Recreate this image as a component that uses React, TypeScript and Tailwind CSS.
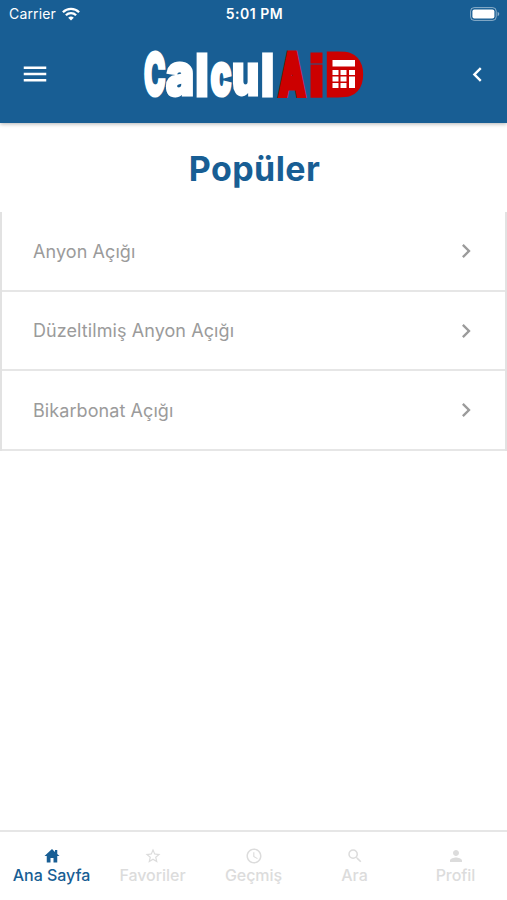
import { MdAccessTime, MdChevronLeft, MdChevronRight, MdMenu, MdPerson, MdSearch, MdStarOutline } from "react-icons/md";

const items = ["Anyon Açığı", "Düzeltilmiş Anyon Açığı", "Bikarbonat Açığı"];

const tabs = [
  { label: "Ana Sayfa", icon: HomeIcon, active: true },
  { label: "Favoriler", icon: MdStarOutline, active: false },
  { label: "Geçmiş", icon: MdAccessTime, active: false },
  { label: "Ara", icon: MdSearch, active: false },
  { label: "Profil", icon: MdPerson, active: false },
];

function HomeIcon({ size }: { size: number }) {
  return (
    <svg width={size} height={size} viewBox="0 0 24 24" fill="currentColor">
      <path d="M19 9.3V4h-3v2.6L12 2.500 2 12h3v8.500h5v-6h4v6h5V12h3z" />
    </svg>
  );
}

function WifiIcon() {
  return (
    <svg width="18" height="14" viewBox="0 0 18 14" fill="none" stroke="white" strokeWidth="2.3">
      <path d="M0.9 5.2a11.5 11.5 0 0 1 16.2 0" />
      <path d="M3.9 8.2a7.2 7.2 0 0 1 10.2 0" />
      <path d="M9 13.6 6.2 10.8a4 4 0 0 1 5.6 0z" fill="white" stroke="none" />
    </svg>
  );
}

function BatteryIcon() {
  return (
    <svg width="30" height="14" viewBox="0 0 30 14">
      <rect x="0.6" y="0.6" width="25.6" height="12.8" rx="3.6" fill="none" stroke="white" strokeOpacity="0.5" />
      <rect x="2.4" y="2.4" width="22" height="9.2" rx="2" fill="white" />
      <path d="M27.6 4.8c2.2.9 2.2 3.5 0 4.4z" fill="white" fillOpacity="0.5" />
    </svg>
  );
}

// Wordmark letters are squeezed to a condensed width, the calculator sits inside the D
function Logo() {
  return (
    <svg width="240" height="88" viewBox="-10 -20 240 88" fontFamily="'DejaVu Sans', sans-serif" fontWeight="700" fontSize="56">
      <g fill="white" stroke="white" strokeWidth="3" fontFamily="Inter, sans-serif" fontWeight="900">
        <text x="1" y="45" fontSize="58" textLength="21.500" lengthAdjust="spacingAndGlyphs">C</text>
        <text x="23" y="45" fontSize="57" textLength="28" lengthAdjust="spacingAndGlyphs">a</text>
        <text x="67.500" y="45" fontSize="57" textLength="21" lengthAdjust="spacingAndGlyphs">c</text>
        <text x="89" y="45" fontSize="57" textLength="27" lengthAdjust="spacingAndGlyphs">u</text>
      </g>
      <g fill="white" stroke="white" strokeWidth="3">
        <text x="51" y="45.500" textLength="16" lengthAdjust="spacingAndGlyphs">l</text>
        <text x="116.500" y="45.500" textLength="16" lengthAdjust="spacingAndGlyphs">l</text>
      </g>
      <g fill="#cc0000" stroke="#cc0000" strokeWidth="3">
        <text x="137" y="43.500" textLength="24" lengthAdjust="spacingAndGlyphs" strokeWidth="7">A</text>
        <text x="164.500" y="45.500" textLength="18" lengthAdjust="spacingAndGlyphs">i</text>
        <text x="180.500" y="45.500" fontSize="59" textLength="41" lengthAdjust="spacingAndGlyphs">D</text>
      </g>
      <rect x="188" y="8" width="27" height="31" fill="#cc0000" />
      <g fill="white">
        <rect x="189.500" y="10" width="22.500" height="6.500" />
        <rect x="189.500" y="20" width="6" height="5" />
        <rect x="197.500" y="20" width="6" height="5" />
        <rect x="206" y="20" width="6" height="5" />
        <rect x="189.500" y="26.500" width="6" height="5" />
        <rect x="197.500" y="26.500" width="6" height="5" />
        <rect x="189.500" y="33" width="6" height="5" />
        <rect x="197.500" y="33" width="6" height="5" />
        <rect x="206" y="26.500" width="6" height="11.500" />
      </g>
    </svg>
  );
}

export default function App() {
  return (
    <div className="flex h-[900px] w-full flex-col bg-white font-['Inter',sans-serif]">
      <header className="z-10 flex h-[123px] shrink-0 flex-col bg-[#185e94] text-white shadow-[0_1px_4px_rgba(0,0,0,0.3)]">
        <div className="grid h-[27px] grid-cols-3 items-center pr-[7px] pl-[9px]">
          <div className="flex items-center gap-[6px] text-[14px] tracking-[0.15px]">
            Carrier
            <WifiIcon />
          </div>
          <div className="text-center text-[14px] font-semibold tracking-[0.5px]">5:01 PM</div>
          <div className="flex justify-end">
            <BatteryIcon />
          </div>
        </div>
        <div className="grid h-[94px] grid-cols-[113px_240px_1fr] items-center pr-[15px] pl-[20px]">
          <MdMenu size={30} />
          <Logo />
          <MdChevronLeft size={29} className="justify-self-end" />
        </div>
      </header>

      <h1 className="flex h-[89px] shrink-0 items-center justify-center pt-[2px] pl-[2px] text-[34px] font-bold tracking-[0.4px] text-[#185e94]">Popüler</h1>

      <ul className="border-x-2 border-[#e2e2e2]">
        {items.map((item) => (
          <li key={item} className="flex h-[79.500px] items-center justify-between border-b-2 border-[#e6e6e6] pt-px pr-[25px] pl-[31px] text-[18px] tracking-[0.080px] text-[#9b9b9b]">
            {item}
            <MdChevronRight size={28} />
          </li>
        ))}
      </ul>

      <nav className="mt-auto grid h-[70px] grid-cols-5 border-t-2 border-[#e6e6e6] px-[1px] pt-[15px]">
        {tabs.map(({ label, icon: Icon, active }) => (
          <div key={label} className={active ? "flex flex-col items-center text-[#185e94]" : "flex flex-col items-center text-[#dcdcdc]"}>
            <Icon size={18} />
            <span className="text-[16px] leading-[20px] font-medium tracking-[-0.05px]">{label}</span>
          </div>
        ))}
      </nav>
    </div>
  );
}
